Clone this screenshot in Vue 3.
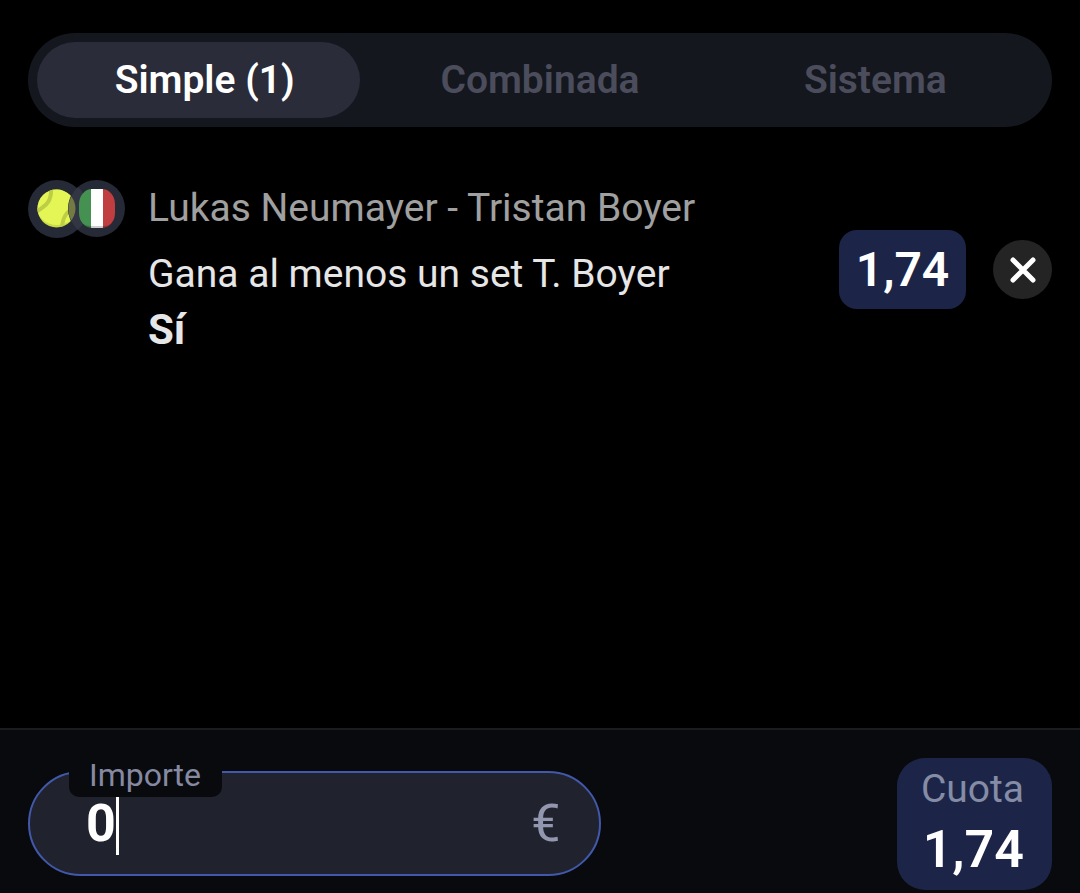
<script setup>
import { ref } from 'vue'

const tabs = ['Simple (1)', 'Combinada', 'Sistema']
const active = ref(0)
const amount = ref('0')
</script>

<template>
  <main class="slip">
    <nav class="tabs" aria-label="Tipo de apuesta">
      <button
        v-for="(tab, i) in tabs"
        :key="tab"
        type="button"
        class="tab"
        :class="{ active: active === i }"
        @click="active = i"
      >{{ tab }}</button>
    </nav>

    <section class="bet">
      <svg class="badges" viewBox="0 0 98 58" width="98" height="58" aria-hidden="true">
        <defs>
          <clipPath id="ball"><circle cx="28.500" cy="28.500" r="19" /></clipPath>
          <clipPath id="flag"><rect x="51" y="9" width="36" height="39" rx="13" ry="15" /></clipPath>
        </defs>
        <circle cx="29" cy="29" r="29" fill="#262936" />
        <g clip-path="url(#ball)">
          <rect x="9" y="9" width="40" height="40" fill="#c9dc45" />
          <ellipse cx="29" cy="25" rx="21" ry="20" fill="#e3f656" />
          <path d="M23 7C24 21 19 25 8 32M34 50C34 37 38 32 50 25" fill="none" stroke="#bdce45" stroke-width="4" />
        </g>
        <circle cx="68.500" cy="28.500" r="28.500" fill="#262936" />
        <path d="M50 7A29 29 0 0 1 50 50A29 29 0 0 1 50 7Z" fill="#3a3d4b" fill-opacity=".6" />
        <g clip-path="url(#ball)">
          <path d="M50 7A29 29 0 0 0 50 50Z" fill="#737a43" />
        </g>
        <g clip-path="url(#flag)">
          <path d="M51 9h12v40H51z" fill="#459151" />
          <path d="M63 9h12v40H63z" fill="#fff" />
          <path d="M75 9h13v40H75z" fill="#c03d40" />
          <path d="M51 39Q53 45 62 46H76Q85 45 87 39V49H51Z" fill="#000" opacity=".2" />
        </g>
      </svg>
      <div class="details">
        <p class="event">Lukas Neumayer - Tristan Boyer</p>
        <p class="market">Gana al menos un set T. Boyer</p>
        <p class="pick">Sí</p>
      </div>
      <span class="odds">1,74</span>
      <button type="button" class="remove" aria-label="Eliminar">
        <svg viewBox="0 0 28 28" width="28" height="28" aria-hidden="true">
          <path d="M4 4L24 24M24 4L4 24" fill="none" stroke="#fff" stroke-width="5" stroke-linecap="round" />
        </svg>
      </button>
    </section>

    <footer class="footer">
      <div class="stake">
        <label for="amount">Importe</label>
        <input id="amount" v-model="amount" type="text" inputmode="decimal" />
        <span class="caret" aria-hidden="true"></span>
        <span class="currency">€</span>
      </div>
      <div class="total">
        <span class="total-label">Cuota</span>
        <strong>1,74</strong>
      </div>
    </footer>
  </main>
</template>

<style>
html,
body {
  margin: 0;
  background: #000;
}
</style>

<style scoped>
.slip {
  box-sizing: border-box;
  display: flex;
  flex-direction: column;
  min-height: 100vh;
  padding-top: 33px;
  background: #000;
  color: #e6e6e6;
  font-family: Roboto, "Liberation Sans", sans-serif;
}
button {
  border: 0;
  font-family: inherit;
  cursor: pointer;
}
.tabs {
  display: grid;
  grid-template-columns: repeat(3, 1fr);
  margin: 0 28px;
  padding: 9px;
  border-radius: 47px;
  background: #15171e;
}
.tab {
  position: relative;
  z-index: 0;
  height: 76px;
  padding: 0;
  background: none;
  color: #4b4d5c;
  font-size: 39px;
  font-weight: 600;
}
.tab.active {
  color: #fff;
}
.tab.active::before {
  content: "";
  position: absolute;
  z-index: -1;
  inset: 0 12px 0 0;
  border-radius: 38px;
  background: #2a2c3a;
}
.bet {
  display: flex;
  align-items: flex-start;
  margin: 53px 28px 0;
}
.badges {
  flex: none;
  margin-right: 22px;
}
.details {
  flex: 1;
}
.details p {
  margin: 0;
  font-size: 39px;
  line-height: 56px;
}
.details .event {
  margin-bottom: 10px;
  color: #a0a0a0;
}
.details .pick {
  font-size: 42px;
  font-weight: 700;
}
.odds {
  box-sizing: border-box;
  min-width: 127px;
  margin-top: 50px;
  border-radius: 18px;
  background: #1c2548;
  color: #fff;
  font-size: 48px;
  font-weight: 600;
  line-height: 79px;
  text-align: center;
}
.remove {
  display: grid;
  place-items: center;
  width: 59px;
  height: 59px;
  margin: 60px 0 0 27px;
  padding: 0;
  border-radius: 50%;
  background: #242424;
}
.footer {
  display: flex;
  align-items: flex-start;
  justify-content: space-between;
  margin-top: auto;
  padding: 28px 28px 3px;
  border-top: 2px solid #1b1c1e;
  background: #090a0e;
}
.stake {
  position: relative;
  box-sizing: border-box;
  display: flex;
  align-items: center;
  width: 56%;
  height: 105px;
  margin-top: 13px;
  padding: 0 39px 0 56px;
  border: 2px solid #4259ab;
  border-radius: 53px;
  background: #20222d;
}
.stake label {
  position: absolute;
  top: -20px;
  left: 39px;
  padding: 0 21px 0 20px;
  border-radius: 0 0 10px 10px;
  background: #090a0e;
  color: #8589a1;
  font-size: 32px;
  line-height: 44px;
}
.stake input {
  flex: 1;
  min-width: 0;
  padding: 0;
  border: 0;
  outline: 0;
  background: none;
  color: #fff;
  font-family: inherit;
  font-size: 52px;
  font-weight: 700;
}
.caret {
  position: absolute;
  top: 24px;
  left: 86px;
  width: 3px;
  height: 58px;
  background: #fff;
}
.currency {
  color: #9297af;
  font-size: 52px;
}
.total {
  box-sizing: border-box;
  display: flex;
  flex-direction: column;
  align-items: flex-end;
  min-width: 155px;
  padding: 8px 28px 2px 20px;
  border-radius: 28px;
  background: #1c2548;
}
.total-label {
  color: #858ca5;
  font-size: 39px;
  line-height: 46px;
}
.total strong {
  color: #fff;
  font-size: 52px;
  font-weight: 600;
  line-height: 76px;
}
</style>
